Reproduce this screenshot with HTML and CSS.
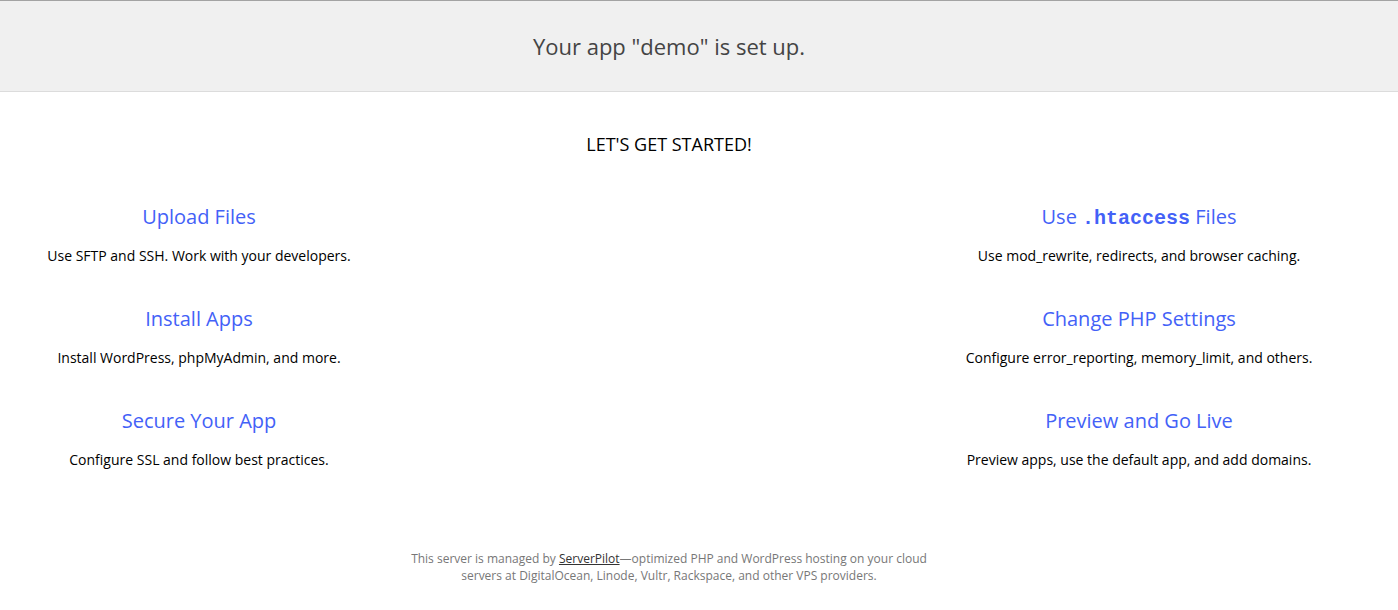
FILE: index.html
```html
<!DOCTYPE html>
<html>
<head>
<meta charset="utf-8">
<title>demo</title>
<link rel="stylesheet" href="styles.css">
</head>
<body>
<header class="banner">
  <h1 class="banner-title">Your app "demo" is set up.</h1>
</header>
<main class="content">
  <h2 class="start">LET'S GET STARTED!</h2>
  <div class="columns">
    <div class="col">
      <div class="item">
        <h3 class="item-title">Upload Files</h3>
        <p class="item-desc">Use SFTP and SSH. Work with your developers.</p>
      </div>
      <div class="item">
        <h3 class="item-title">Install Apps</h3>
        <p class="item-desc">Install WordPress, phpMyAdmin, and more.</p>
      </div>
      <div class="item">
        <h3 class="item-title">Secure Your App</h3>
        <p class="item-desc">Configure SSL and follow best practices.</p>
      </div>
    </div>
    <div class="col">
      <div class="item">
        <h3 class="item-title">Use <code class="mono">.htaccess</code> Files</h3>
        <p class="item-desc">Use mod_rewrite, redirects, and browser caching.</p>
      </div>
      <div class="item">
        <h3 class="item-title">Change PHP Settings</h3>
        <p class="item-desc">Configure error_reporting, memory_limit, and others.</p>
      </div>
      <div class="item">
        <h3 class="item-title">Preview and Go Live</h3>
        <p class="item-desc">Preview apps, use the default app, and add domains.</p>
      </div>
    </div>
  </div>
  <footer class="foot">
    <p>This server is managed by <a href="#" class="foot-link">ServerPilot</a>—optimized PHP and WordPress hosting on your cloud<br>servers at DigitalOcean, Linode, Vultr, Rackspace, and other VPS providers.</p>
  </footer>
</main>
</body>
</html>
```
FILE: styles.css
```css
html, body {
  margin: 0;
  padding: 0;
  background: #fff;
}
body {
  font-family: "Open Sans", "Noto Sans", sans-serif;
  color: #000;
}
.banner {
  background: #f0f0f0;
  border-top: 1px solid #a3a3a3;
  border-bottom: 1px solid #dcdcdc;
  height: 90px;
  display: flex;
  align-items: center;
  justify-content: center;
  padding-right: 60px;
}
.banner-title {
  margin: 0;
  font-size: 22px;
  font-weight: 400;
  color: #444;
  line-height: 30px;
}
.content {
  width: 1338px;
  display: flex;
  flex-direction: column;
  align-items: center;
}
.start {
  margin: 41px 0 0;
  font-size: 18px;
  font-weight: 400;
  line-height: 22px;
  color: #000;
}
.columns {
  width: 100%;
  display: flex;
  justify-content: space-between;
  margin-top: 48px;
}
.col {
  width: 398px;
  display: flex;
  flex-direction: column;
  align-items: center;
  gap: 38.5px;
}
.item {
  display: flex;
  flex-direction: column;
  align-items: center;
  gap: 13.5px;
}
.item-title {
  margin: 0;
  font-size: 20px;
  font-weight: 400;
  height: 28px;
  line-height: 28px;
  color: #4361f7;
  white-space: nowrap;
}
.mono {
  font-family: "Liberation Mono", "DejaVu Sans Mono", monospace;
  font-size: 20px;
  font-weight: 700;
  line-height: 1;
}
.item-desc {
  margin: 0;
  font-size: 14px;
  line-height: 22px;
  color: #000;
  white-space: nowrap;
}
.foot {
  margin-top: 79px;
  text-align: center;
}
.foot p {
  margin: 0;
  font-size: 12px;
  line-height: 17px;
  color: #777;
}
.foot-link {
  color: #333;
  text-decoration: underline;
}
```
